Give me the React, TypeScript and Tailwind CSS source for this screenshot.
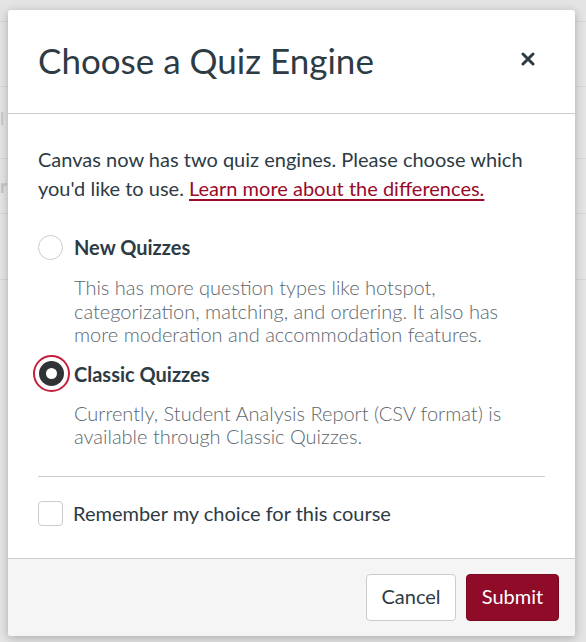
import React from "react";

export default function App() {
  return (
    <div
      className="relative w-[586px] h-[642px] overflow-hidden bg-[#e4e4e4]"
      style={{ fontFamily: "Lato, 'Liberation Sans', sans-serif" }}
    >
      {/* faint background page */}
      <div className="absolute inset-0 flex flex-col">
        <div className="h-[22px] border-b border-[#d6d6d6]" />
        <div className="h-[65px] border-b border-[#d6d6d6]" />
        <div className="h-[72px] border-b border-[#d6d6d6] text-[#c4c4c4] text-[18px] pt-[18px]">l</div>
        <div className="h-[55px] border-b border-[#d6d6d6] text-[#c4c4c4] text-[18px] pt-[14px] font-bold">r</div>
        <div className="h-[66px] border-b border-[#d6d6d6]" />
      </div>

      <div className="absolute left-[8px] top-[10px] w-[567px] h-[626px] bg-white rounded-[3px] shadow-[0_2px_10px_rgba(0,0,0,0.25)] flex flex-col overflow-hidden">
        {/* header */}
        <div className="h-[104px] shrink-0 border-b border-[#c7cdd1] flex items-center justify-between pl-[30px] pr-[40px]">
          <h1 className="text-[35px] leading-[40px] text-[#2d3b45] font-normal pb-[4px]">
            Choose a Quiz Engine
          </h1>
          <svg width="14" height="14" viewBox="0 0 14 14" className="mb-[6px]">
            <path d="M2 2 L12 12 M12 2 L2 12" stroke="#2d3b45" strokeWidth="3" strokeLinecap="round" />
          </svg>
        </div>

        {/* body */}
        <div className="flex-1 px-[30px] pt-[31px]">
          <p className="text-[20px] leading-[29px] text-[#2d3b45]">
            Canvas now has two quiz engines. Please choose which you'd like to use.{" "}
            <a className="text-[#990a29] underline underline-offset-[3px]" href="#">
              Learn more about the differences.
            </a>
          </p>

          <div className="mt-[30px] flex items-center h-[28px]">
            <span className="w-[25px] h-[25px] rounded-full border border-[#c7cdd1] bg-white shrink-0" />
            <span className="ml-[11px] text-[20px] font-bold text-[#2d3b45]">New Quizzes</span>
          </div>
          <p className="ml-[36px] mt-[15px] text-[20px] leading-[23.5px] font-light text-[#5c666e]">
            This has more question types like hotspot, categorization, matching, and ordering. It also has more moderation and accommodation features.
          </p>

          <div className="mt-[13px] flex items-center h-[28px]">
            <span className="relative w-[25px] h-[25px] shrink-0 ml-[1px]">
              <span className="absolute -inset-[6px] rounded-full border-2 border-[#c7203f]" />
              <span className="absolute inset-0 rounded-full bg-[#2f3336] flex items-center justify-center">
                <span className="w-[11px] h-[11px] rounded-full bg-white" />
              </span>
            </span>
            <span className="ml-[10px] text-[20px] font-bold text-[#2d3b45]">Classic Quizzes</span>
          </div>
          <p className="ml-[36px] mt-[14px] text-[20px] leading-[23.5px] font-light text-[#5c666e]">
            Currently, Student Analysis Report (CSV format) is available through Classic Quizzes.
          </p>

          <div className="mt-[27px] border-t border-[#c7cdd1]" />

          <div className="mt-[24px] flex items-center">
            <span className="w-[25px] h-[25px] rounded-[4px] border border-[#c7cdd1] bg-white shrink-0" />
            <span className="ml-[10px] text-[20px] leading-[24px] text-[#2d3b45]">
              Remember my choice for this course
            </span>
          </div>
        </div>

        {/* footer */}
        <div className="h-[78px] shrink-0 border-t border-[#c7cdd1] bg-[#f5f5f5] flex items-start justify-end pt-[15px] pr-[16px] gap-[10px]">
          <button className="h-[47px] w-[90px] pb-[3px] rounded-[4px] border border-[#c7cdd1] bg-white text-[20px] text-[#2d3b45]">
            Cancel
          </button>
          <button className="h-[47px] w-[93px] pb-[3px] rounded-[4px] border border-[#7a0820] bg-[#900b28] text-[20px] text-white">
            Submit
          </button>
        </div>
      </div>
    </div>
  );
}
